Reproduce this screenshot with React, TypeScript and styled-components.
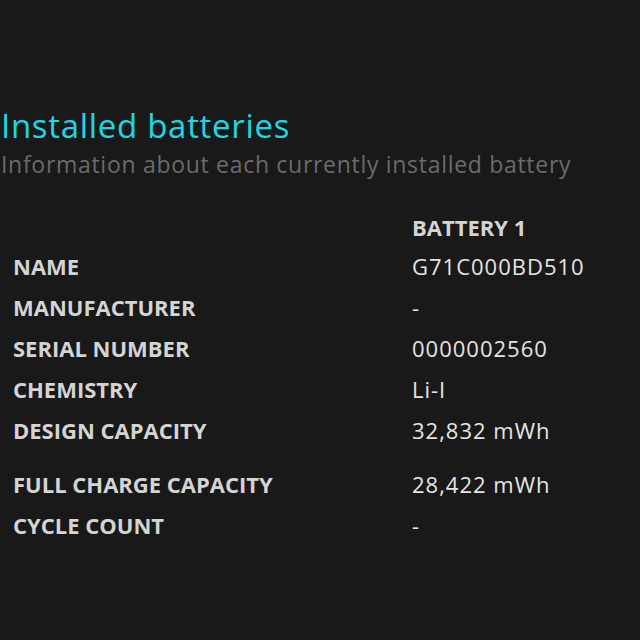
import styled, { createGlobalStyle } from 'styled-components'

const GlobalStyle = createGlobalStyle`
  html, body {
    margin: 0;
    padding: 0;
    background: #191919;
  }
  body {
    font-family: "Open Sans", "Noto Sans", "Liberation Sans", sans-serif;
  }
`

const Page = styled.div`
  width: 640px;
  height: 640px;
  background: #191919;
  padding-top: 105px;
  box-sizing: border-box;
  overflow: hidden;
`

const Title = styled.h1`
  margin: 0 0 0 1px;
  font-size: 33px;
  font-weight: 400;
  letter-spacing: 0.7px;
  line-height: 42px;
  color: #1cd8e4;
`

const Subtitle = styled.p`
  margin: 1px 0 0 1px;
  font-size: 23px;
  font-weight: 400;
  letter-spacing: 0.7px;
  line-height: 32px;
  color: #6b6b6b;
`

const Table = styled.div`
  display: grid;
  grid-template-columns: 399px 1fr;
  padding-left: 13px;
  margin-top: 28px;
`

const Cell = styled.div<{ $gap?: boolean; $head?: boolean }>`
  height: ${(p) => (p.$head ? '38px' : '41px')};
  line-height: ${(p) => (p.$head ? '38px' : '41px')};
  font-size: 22px;
  white-space: nowrap;
  margin-top: ${(p) => (p.$gap ? '13px' : '0')};
`

const Label = styled(Cell)`
  font-weight: 700;
  color: #d4d4d4;
`

const Value = styled(Cell)`
  font-weight: ${(p) => (p.$head ? 700 : 400)};
  letter-spacing: ${(p) => (p.$head ? '0' : '1px')};
  color: ${(p) => (p.$head ? '#d4d4d4' : '#e4e4e4')};
`

const rows: { label: string; value: string; gap?: boolean }[] = [
  { label: 'NAME', value: 'G71C000BD510' },
  { label: 'MANUFACTURER', value: '-' },
  { label: 'SERIAL NUMBER', value: '0000002560' },
  { label: 'CHEMISTRY', value: 'Li-I' },
  { label: 'DESIGN CAPACITY', value: '32,832 mWh' },
  { label: 'FULL CHARGE CAPACITY', value: '28,422 mWh', gap: true },
  { label: 'CYCLE COUNT', value: '-' },
]

export default function App() {
  return (
    <Page>
      <GlobalStyle />
      <Title>Installed batteries</Title>
      <Subtitle>Information about each currently installed battery</Subtitle>
      <Table>
        <Label $head />
        <Value $head>BATTERY 1</Value>
        {rows.flatMap((r) => [
          <Label key={r.label + '-l'} $gap={r.gap}>{r.label}</Label>,
          <Value key={r.label + '-v'} $gap={r.gap}>{r.value}</Value>,
        ])}
      </Table>
    </Page>
  )
}
